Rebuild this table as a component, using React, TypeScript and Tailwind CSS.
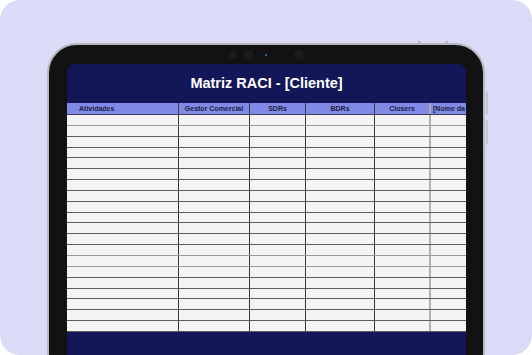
import React from "react";

const cols = [
  { label: "Atividades", w: "w-[112px]", align: "text-left pl-[12px]" },
  { label: "Gestor Comercial", w: "w-[71px]", align: "text-center" },
  { label: "SDRs", w: "w-[56px]", align: "text-center" },
  { label: "BDRs", w: "w-[69px]", align: "text-center" },
  { label: "Closers", w: "w-[56px]", align: "text-center" },
  { label: "[Nome da", w: "flex-1", align: "text-left pl-[2px]" },
];

const rows = Array.from({ length: 20 }, (_, i) => i);
const greyRows = new Set([0, 12, 13]);

export default function App() {
  return (
    <div className="w-[532px] h-[355px] bg-white overflow-hidden" style={{ fontFamily: '"Liberation Sans", Arial, sans-serif' }}>
      <div className="w-[532px] h-[355px] rounded-[20px] bg-[#dadbf6] overflow-hidden flex justify-center pt-[43px]">
        <div className="relative w-[438px] h-[340px]">
          {/* top buttons */}
          <div className="absolute left-[371px] top-[-2px] w-[3px] h-[2px] bg-[#b8b8c4]" />
          <div className="absolute left-[398px] top-[-2px] w-[3px] h-[2px] bg-[#b8b8c4]" />
          {/* side buttons */}
          <div className="absolute right-[-3px] top-[48px] flex flex-col gap-[5px]">
            <div className="w-[2px] h-[24px] bg-[#c4c4cc] rounded-r" />
            <div className="w-[2px] h-[25px] bg-[#c4c4cc] rounded-r" />
          </div>
          <div className="w-full h-full rounded-[30px] border-[2px] border-[#b7b7bd] bg-[#121212] pl-[18px] pr-[17px] flex flex-col">
            {/* camera */}
            <div className="h-[19px] flex items-center justify-center pr-[1px]">
              <div className="w-[8px] h-[8px] rounded-full bg-[#1c1c1c]" />
              <div className="ml-[7px] w-[10px] h-[10px] rounded-full bg-[#1b1b1b]" />
              <div className="ml-[11px] w-[2px] h-[2px] bg-[#2a5fae]" />
              <div className="ml-[12px] w-[3px] h-[3px] rounded-full bg-[#181818]" />
              <div className="ml-[12px] w-[10px] h-[10px] rounded-full bg-[#1b1b1b]" />
            </div>
            <div className="w-full h-[300px] rounded-t-[8px] bg-[#141757] overflow-hidden flex flex-col">
              <div className="h-[39px] flex items-center justify-center">
                <span className="text-white font-bold text-[14.5px] leading-none">Matriz RACI - [Cliente]</span>
              </div>
              <div className="flex h-[12px] bg-[#8189e7] border-b border-[#3c3c5c]">
                {cols.map((c, i) => (
                  <div
                    key={i}
                    className={`${c.w} ${c.align} ${i < 4 ? "border-r border-[#3b3b4b]" : i === 4 ? "border-r-2 border-[#a9a9b4]" : ""} text-[7px] font-bold text-[#1c1c44] leading-[12px] whitespace-nowrap overflow-hidden`}
                  >
                    {c.label}
                  </div>
                ))}
              </div>
              <div className="h-[217px] flex flex-col bg-[#f4f4f4]">
                {rows.map((r) => (
                  <div key={r} className={`flex-1 flex border-b ${greyRows.has(r) ? "border-[#9a9a9a]" : "border-[#5c5c5c]"}`}>
                    {cols.map((c, i) => (
                      <div
                        key={i}
                        className={`${c.w} ${i < 4 ? "border-r border-[#3b3b3b]" : i === 4 ? "border-r-2 border-[#b0b0b0]" : ""}`}
                      />
                    ))}
                  </div>
                ))}
              </div>
              <div className="flex-1 bg-[#141757]" />
            </div>
          </div>
        </div>
      </div>
    </div>
  );
}
